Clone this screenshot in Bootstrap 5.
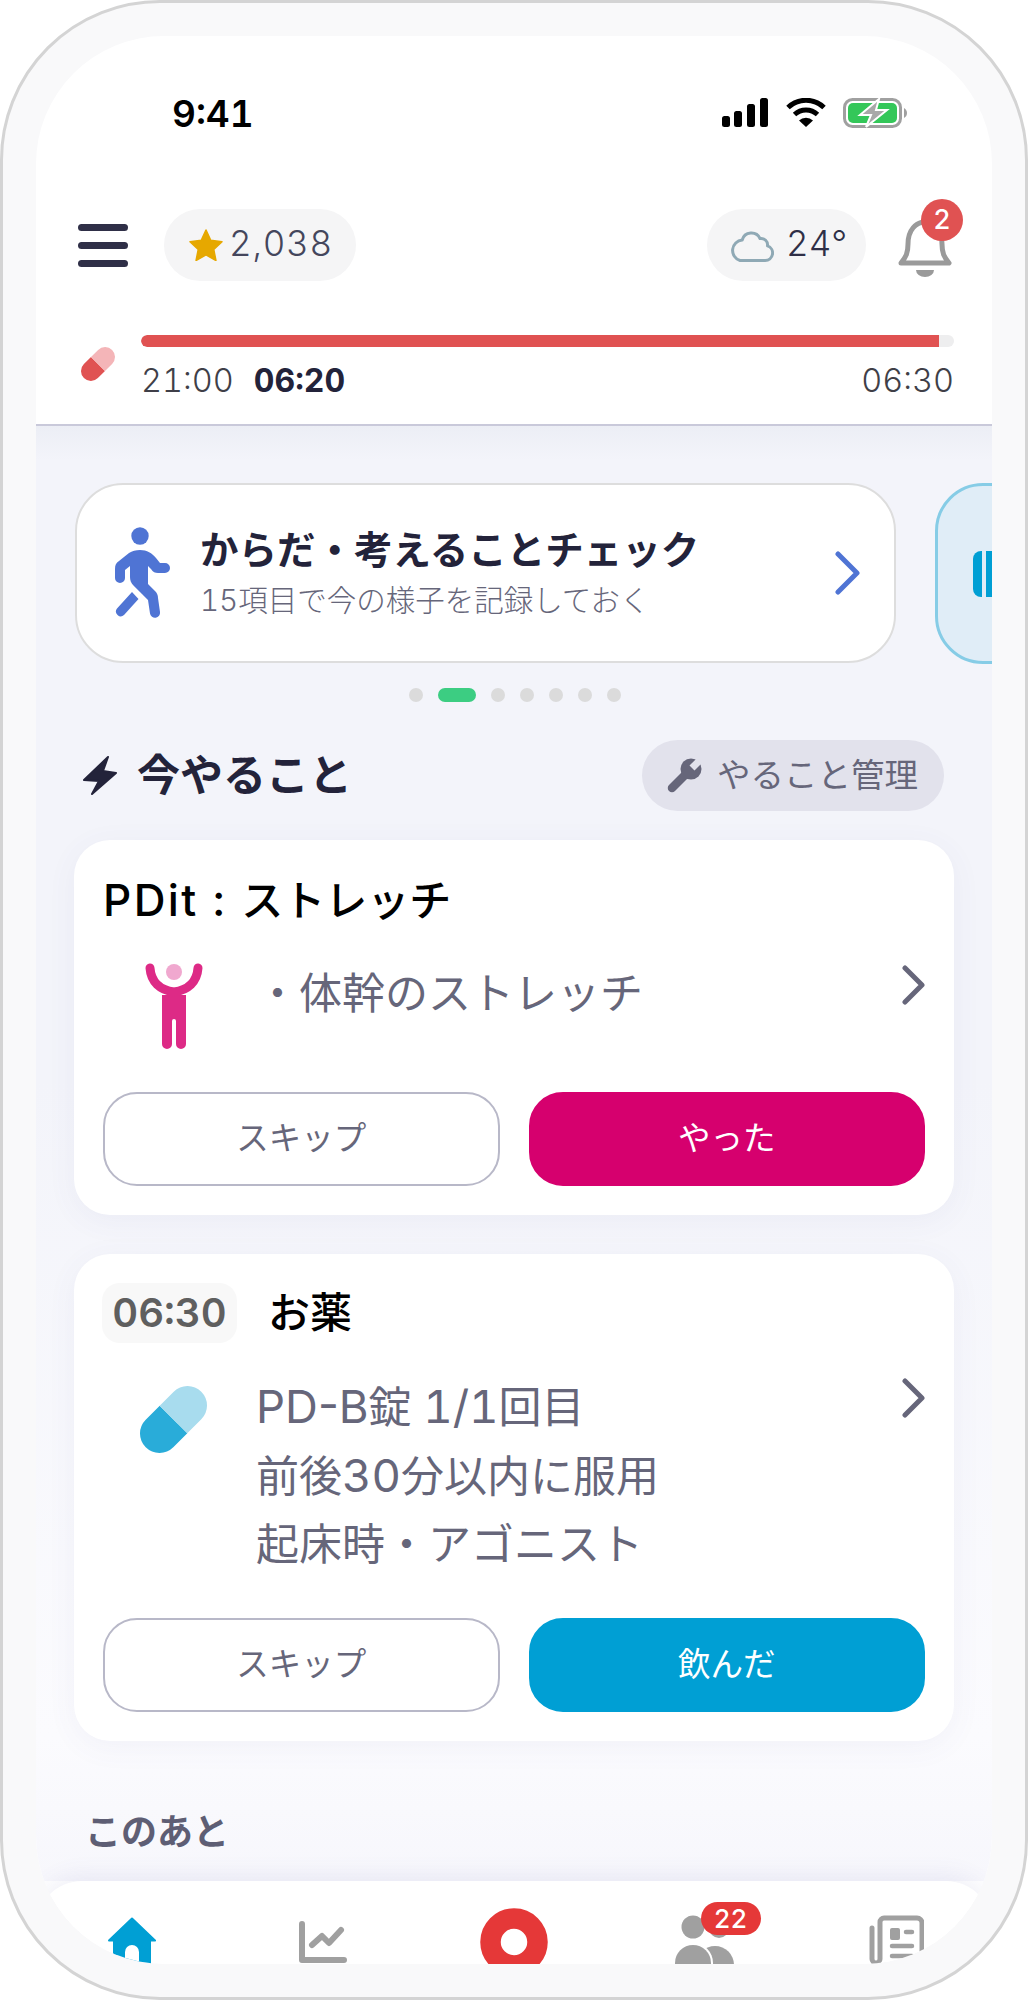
<!DOCTYPE html>
<html lang="ja">

<head>
    <meta charset="UTF-8">
    <meta name="viewport" content="width=device-width, initial-scale=1">
    <title>今やること</title>
    <link href="https://cdn.jsdelivr.net/npm/bootstrap@5.3.0/dist/css/bootstrap.min.css" rel="stylesheet">
    <style>
        body { margin: 0; background: #fff; font-family: "Inter", "Noto Sans CJK JP", sans-serif; font-variant-numeric: tabular-nums; }
        svg { display: block; flex-shrink: 0; }
        .device { width: 1028px; height: 2000px; padding: 33px; border: 3px solid #d4d4d4; border-radius: 160px; background: #f9f9fa; }
        .screen { height: 1928px; border-radius: 128px; overflow: hidden; background: #fff; }

        .status-bar { height: 173px; padding: 58px 84px 0 136px; }
        .clock { font-size: 37px; line-height: 40px; font-weight: 600; color: #000; }
        .status-icons { gap: 17.5px; margin-top: 4px; }

        .top-row { height: 72px; padding: 0 40px 0 42px; }
        .chip-pill { height: 72px; border-radius: 36px; background: #f5f5f6; color: #44465c; font-size: 35px; font-weight: 350; letter-spacing: .8px; }
        .chip-pill span { margin-top: -4px; }
        .score-pill { width: 192px; margin-left: 36px; padding-left: 25px; gap: 6px; }
        .weather-pill { width: 159px; padding-left: 24px; gap: 12px; color: #2f2f47; letter-spacing: 0; }
        .bell-box { position: relative; width: 54px; height: 57px; margin: 11px 0 0 32px; align-self: flex-start; }
        .bell-count { position: absolute; top: -21px; left: 23px; width: 42px; height: 42px; border-radius: 50%; background: #e05252; color: #fff; font-size: 27px; font-weight: 500; line-height: 42px; text-align: center; }

        .sleep-row { padding: 54px 38px 22px 45px; gap: 26px; border-bottom: 2px solid #c9c9da; }
        .sleep-icon { margin-top: 12px; }
        .sleep-bar { height: 12px; border-radius: 6px; background: #eeeeef; overflow: hidden; }
        .sleep-fill { height: 100%; background: #e05252; border-radius: 6px 0 0 6px; }
        .sleep-times { margin-top: 13px; height: 42px; font-size: 32.5px; line-height: 42px; font-weight: 350; color: #3f3f48; }
        .sleep-times b { margin-left: 20px; font-size: 32px; color: #23233a; font-weight: 700; }

        .main-area { min-height: 0; background: linear-gradient(#eceef5 0, #f3f4fa 34px, #f3f4fa 45%, #fbfbfe 90%, #f7f7fc 100%); }
        .banner-strip { padding: 57px 0 0 39px; gap: 39px; }
        .banner-box { flex: 0 0 821px; height: 180px; border: 2px solid #ddd; border-radius: 48px; background: #fff; padding: 0 34px 0 38px; gap: 30px; }
        .banner-next { flex: 0 0 300px; height: 181px; border: 3px solid #86cce6; border-radius: 48px; background: #e0edf7; padding-left: 33px; }
        .banner-title { font-size: 38.5px; line-height: 52px; font-weight: 700; color: #23233a; }
        .banner-sub { margin-top: 2px; font-size: 29.5px; line-height: 44px; font-weight: 300; color: #66667a; }

        .page-dots { margin-top: 24px; padding-left: 2px; gap: 15px; }
        .page-dot { width: 14px; height: 14px; border-radius: 7px; background: #dbdbdb; }
        .page-dot.on { width: 38px; background: #3ccd82; }

        .section-head { margin: 38px 48px 0 47px; height: 71px; }
        .section-title { font-size: 43px; font-weight: 700; color: #23233a; gap: 19px; }
        .manage-btn { height: 71px; width: 302px; border-radius: 36px; background: #e2e2ec; color: #66667a; font-size: 33.5px; padding-left: 25px; gap: 15px; }

        .task-card { margin: 29px 38px 0; padding: 30px 29px 29px; border: 0; border-radius: 36px; box-shadow: 0 6px 30px rgba(90, 90, 160, .06); }
        .task-card + .task-card { margin-top: 39px; padding-top: 29px; }
        .task-title { height: 60px; font-size: 42px; line-height: 60px; font-weight: 500; color: #000; }
        .title-latin { font-size: 44px; letter-spacing: 2.4px; }
        .time-chip { margin-left: -1px; width: 135px; height: 60px; border-radius: 18px; background: #f8f8f8; color: #5f5f5f; font-size: 40px; font-weight: 600; }
        .head-gap { gap: 31px; }
        .task-body { margin-top: 33px; height: 87px; }
        .task-body.tall { margin-top: 29px; height: 207px; }
        .task-icon-cell { width: 153px; }
        .stretch-icon { margin-left: 42px; }
        .pill-icon { margin: 14px 0 0 37px; }
        .task-text { margin-top: -4px; font-size: 43px; line-height: 69px; color: #66667a; }
        .text-line { display: block; height: 69px; }
        .text-latin { font-size: 45.5px; }
        .text-name { font-size: 45.5px; font-variant-numeric: normal; font-feature-settings: normal; }
        .tall .task-text { margin-top: 0; }
        .task-chevron { margin: 2px 0 0 auto; }
        .tall .task-chevron { margin-top: 6px; }
        .task-actions { margin-top: 42px; gap: 29px; }
        .tall + .task-actions { margin-top: 39px; }
        .act-btn { flex: 1 1 0; height: 94px; border-width: 2px; border-style: solid; border-radius: 34px; font-size: 32.5px; }
        .act-skip { background: #fff; border-color: #b8b8c8; color: #66667a; }
        .act-pink { background: #d6006e; border-color: #d6006e; color: #fff; }
        .act-blue { background: #009fd4; border-color: #009fd4; color: #fff; }

        .later-label { margin: 67px 0 0 49px; font-size: 36px; line-height: 48px; font-weight: 700; color: #5e5e74; }

        .tab-bar { height: 83px; flex-shrink: 0; background: #fff; border-radius: 46px 46px 0 0; box-shadow: 0 -6px 22px rgba(90, 90, 170, .09); }
        .tab-item { position: relative; flex: 1 1 0; }
        .tab-count { position: absolute; top: 21px; left: 91px; width: 60px; height: 33px; border-radius: 17px; background: #e53838; color: #fff; font-size: 26px; font-weight: 500; line-height: 33px; text-align: center; }
    </style>
</head>

<body>
    <div class="device">
        <div class="screen d-flex flex-column">

            <!-- ステータスバー -->
            <div class="status-bar d-flex justify-content-between align-items-start flex-shrink-0">
                <div class="clock">9:41</div>
                <div class="status-icons d-flex align-items-start">
                    <svg width="46" height="29" viewBox="0 0 46 29">
                        <rect x="0" y="18" width="8" height="11" rx="2.5" />
                        <rect x="12" y="13" width="8" height="16" rx="2.5" />
                        <rect x="25" y="6" width="8" height="23" rx="2.5" />
                        <rect x="38" y="0" width="8" height="29" rx="2.5" />
                    </svg>
                    <svg width="40" height="29" viewBox="0 0 40 29" fill="none" stroke="#000" stroke-width="5">
                        <path d="M2 9.5A26 26 0 0 1 38 9.5" />
                        <path d="M8.5 16.5A17 17 0 0 1 31.5 16.5" />
                        <path d="M20 29L13 22.5A10 10 0 0 1 27 22.5Z" fill="#000" stroke="none" />
                    </svg>
                    <svg width="65" height="30" viewBox="0 0 65 30">
                        <rect x="1.5" y="1.5" width="56" height="27" rx="8" fill="none" stroke="#a0a0a0" stroke-width="3" />
                        <rect x="5" y="5" width="49" height="20" rx="5" fill="#34c759" />
                        <path d="M61 10c2 1 3 3 3 5s-1 4-3 5z" fill="#a0a0a0" />
                        <path d="M36 1L17 17H28L23 29L44 12H33Z" fill="#a8a8a8" stroke="#fff" stroke-width="2" />
                    </svg>
                </div>
            </div>

            <!-- ヘッダー -->
            <div class="top-row d-flex align-items-center flex-shrink-0">
                <svg width="50" height="43" viewBox="0 0 50 43" fill="#2f2f47">
                    <rect y="0" width="50" height="7" rx="3.5" />
                    <rect y="18" width="50" height="7" rx="3.5" />
                    <rect y="36" width="50" height="7" rx="3.5" />
                </svg>
                <div class="chip-pill score-pill d-flex align-items-center">
                    <svg width="34" height="32" viewBox="1 1 32 31">
                        <path d="M17 2l4.600 10 10.900 1.300-8 7.500 2.100 10.700L17 26.100 7.400 31.500l2.100-10.700-8-7.500L12.400 12z" fill="#e6a800" stroke="#e6a800" stroke-width="1.5" stroke-linejoin="round" />
                    </svg>
                    <span>2,038</span>
                </div>
                <div class="chip-pill weather-pill d-flex align-items-center ms-auto">
                    <svg width="43" height="34" viewBox="0 0 43 34" fill="none" stroke="#8fa9b5" stroke-width="3">
                        <path d="M9 32.500h25a7.500 7.500 0 0 0 2.500-14.600A6.500 6.500 0 0 0 29 10.500a9.500 9.500 0 0 0-17.800 1.500A10.500 10.500 0 0 0 9 32.500z" stroke-linejoin="round" />
                    </svg>
                    <span>24°</span>
                </div>
                <div class="bell-box">
                    <svg width="54" height="57" viewBox="0 0 54 57">
                        <path d="M3 43C8 37 10 33 10 24C10 10 18 2 27 2C36 2 44 10 44 24C44 33 46 37 51 43Z" fill="none" stroke="#9a9a9a" stroke-width="5" stroke-linejoin="round" />
                        <path d="M18 50h18a9 7 0 0 1-18 0z" fill="#9a9a9a" />
                    </svg>
                    <div class="bell-count">2</div>
                </div>
            </div>

            <!-- 睡眠バー -->
            <div class="sleep-row d-flex align-items-start flex-shrink-0">
                <svg class="sleep-icon" width="34" height="34" viewBox="0 0 67 67">
                    <g transform="rotate(-45 33.500 33.500)">
                        <path d="M33.500 14H13.700A19.500 19.500 0 0 0 13.700 53H33.500Z" fill="#e05252" />
                        <path d="M33.500 14H53.300A19.500 19.500 0 0 1 53.300 53H33.500Z" fill="#f4b5b8" />
                    </g>
                </svg>
                <div class="flex-grow-1">
                    <div class="sleep-bar">
                        <div class="sleep-fill" style="width: 98.2%"></div>
                    </div>
                    <div class="sleep-times d-flex">
                        <span>21:00</span><b>06:20</b><span class="ms-auto">06:30</span>
                    </div>
                </div>
            </div>

            <div class="main-area flex-grow-1">
                <!-- カルーセル -->
                <div class="banner-strip d-flex">
                    <div class="banner-box d-flex align-items-center">
                        <svg width="55" height="92" viewBox="115 528 55 92" fill="#4f74d4">
                            <circle cx="140" cy="537" r="8.700" />
                            <path d="M140 551C147 551 152 554 156 559L160 564H165a5 5 0 0 1 0 10H158C155 574 153 573 151 570L148 567L148 585L155 592C157 594 158 596 158 599L160 613a5 5 0 0 1-10 1.500L148 601L133 586C131 584 130 581 130 578L130 567L125 571V579a5 5 0 0 1-10 0V570C115 566 116 564 119 562L129 554C132 552 136 551 140 551Z" />
                            <path d="M132 593L138.500 600L124 616a4.800 4.800 0 0 1-7-6.500Z" />
                        </svg>
                        <div class="flex-grow-1">
                            <div class="banner-title">からだ・考えることチェック</div>
                            <div class="banner-sub">15項目で今の様子を記録しておく</div>
                        </div>
                        <svg width="25" height="44" viewBox="0 0 25 44" fill="none" stroke="#4f74d4" stroke-width="5" stroke-linecap="round" stroke-linejoin="round">
                            <path d="M3 3L22 22L3 41" />
                        </svg>
                    </div>
                    <div class="banner-next d-flex align-items-center">
                        <svg width="40" height="46" viewBox="0 0 40 46" fill="#009fd4">
                            <path d="M10 0h1v46h-1a8 8 0 0 1-8-8V8a8 8 0 0 1 8-8z" />
                            <rect x="15" y="0" width="25" height="46" />
                        </svg>
                    </div>
                </div>

                <div class="page-dots d-flex justify-content-center">
                    <span class="page-dot"></span>
                    <span class="page-dot on"></span>
                    <span class="page-dot"></span>
                    <span class="page-dot"></span>
                    <span class="page-dot"></span>
                    <span class="page-dot"></span>
                    <span class="page-dot"></span>
                </div>

                <!-- 今やること -->
                <div class="section-head d-flex justify-content-between align-items-center">
                    <div class="section-title d-flex align-items-center">
                        <svg width="35" height="41" viewBox="83 755 35 41">
                            <path d="M108 757L84 780L99 781L92 794L116 773L103 771Z" fill="#23233a" stroke="#23233a" stroke-width="2" stroke-linejoin="round" />
                        </svg>
                        <span>今やること</span>
                    </div>
                    <div class="manage-btn d-flex align-items-center">
                        <svg width="35" height="35" viewBox="0 0 35 35">
                            <path d="M5 30L20 15" stroke="#66667a" stroke-width="8.500" stroke-linecap="round" />
                            <circle cx="24" cy="11" r="10.500" fill="#66667a" />
                            <path d="M25 10L36 -1" stroke="#e2e2ec" stroke-width="7" />
                        </svg>
                        <span>やること管理</span>
                    </div>
                </div>

                <!-- カード -->
                <div class="card task-card">
                    <div class="task-title"><span class="title-latin">PDit : </span>ストレッチ</div>
                    <div class="task-body d-flex align-items-start">
                        <div class="task-icon-cell flex-shrink-0">
                            <svg class="stretch-icon" width="58" height="87" viewBox="145 963 58 87">
                                <circle cx="174" cy="972" r="8" fill="#f0a8cf" />
                                <path d="M150 968C151 982 160 990 174 992C188 990 197 982 198 968" fill="none" stroke="#dd2a86" stroke-width="9" stroke-linecap="round" />
                                <path d="M162 995H186V1044a5 5 0 0 1-10 0V1021a2 2 0 0 0-4 0V1044a5 5 0 0 1-10 0Z" fill="#dd2a86" />
                            </svg>
                        </div>
                        <div class="task-text">・体幹のストレッチ</div>
                        <svg class="task-chevron" width="23" height="40" viewBox="0 0 23 40" fill="none" stroke="#66667a" stroke-width="5" stroke-linecap="round" stroke-linejoin="round">
                            <path d="M3 3L20 20L3 37" />
                        </svg>
                    </div>
                    <div class="task-actions d-flex">
                        <button class="btn act-btn act-skip" type="button">スキップ</button>
                        <button class="btn act-btn act-pink" type="button">やった</button>
                    </div>
                </div>

                <div class="card task-card">
                    <div class="d-flex align-items-center head-gap">
                        <div class="time-chip d-flex align-items-center justify-content-center">06:30</div>
                        <div class="task-title">お薬</div>
                    </div>
                    <div class="task-body tall d-flex align-items-start">
                        <div class="task-icon-cell flex-shrink-0">
                            <svg class="pill-icon" width="67" height="67" viewBox="0 0 67 67">
                                <g transform="rotate(-45 33.500 33.500)">
                                    <path d="M33.500 14H13.700A19.500 19.500 0 0 0 13.700 53H33.500Z" fill="#29acd9" />
                                    <path d="M33.500 14H53.300A19.500 19.500 0 0 1 53.300 53H33.500Z" fill="#a8dcee" />
                                </g>
                            </svg>
                        </div>
                        <div class="task-text">
                            <span class="text-line"><span class="text-name">PD-B</span>錠 <span class="text-latin">1/1</span>回目</span>
                            <span class="text-line">前後<span class="text-latin">30</span>分以内に服用</span>
                            <span class="text-line">起床時・アゴニスト</span>
                        </div>
                        <svg class="task-chevron" width="23" height="40" viewBox="0 0 23 40" fill="none" stroke="#66667a" stroke-width="5" stroke-linecap="round" stroke-linejoin="round">
                            <path d="M3 3L20 20L3 37" />
                        </svg>
                    </div>
                    <div class="task-actions d-flex">
                        <button class="btn act-btn act-skip" type="button">スキップ</button>
                        <button class="btn act-btn act-blue" type="button">飲んだ</button>
                    </div>
                </div>

                <div class="later-label">このあと</div>
            </div>

            <!-- タブバー -->
            <div class="tab-bar d-flex">
                <div class="tab-item d-flex justify-content-center">
                    <svg width="48" height="83" viewBox="0 0 48 83">
                        <path d="M24 37.500L47 59.500H42V83H6V59.500H1Z" fill="#009fd4" stroke="#009fd4" stroke-width="2" stroke-linejoin="round" />
                        <path d="M17 83V71a7 7 0 0 1 14 0V83Z" fill="#fff" />
                    </svg>
                </div>
                <div class="tab-item d-flex justify-content-center">
                    <svg width="48" height="83" viewBox="0 0 48 83" fill="none" stroke="#a0a0a0" stroke-linecap="round" stroke-linejoin="round">
                        <path d="M3 43V79H45" stroke-width="6" />
                        <path d="M13 64L23 55L30 62L42 49" stroke-width="6" />
                    </svg>
                </div>
                <div class="tab-item d-flex justify-content-center">
                    <svg width="68" height="83" viewBox="0 0 68 83">
                        <circle cx="34" cy="61" r="23.500" fill="none" stroke="#e53838" stroke-width="20.500" />
                    </svg>
                </div>
                <div class="tab-item d-flex justify-content-center">
                    <svg width="60" height="83" viewBox="0 0 60 83" fill="#a0a0a0">
                        <circle cx="18" cy="46" r="11.500" />
                        <circle cx="44" cy="47" r="10" />
                        <circle cx="40" cy="84" r="19" />
                        <circle cx="18" cy="82" r="20" fill="#fff" />
                        <circle cx="18" cy="82" r="18" />
                    </svg>
                    <div class="tab-count">22</div>
                </div>
                <div class="tab-item d-flex justify-content-center">
                    <svg width="55" height="83" viewBox="0 0 55 83" fill="none" stroke="#a0a0a0" stroke-linecap="round">
                        <path d="M3 47V78a4 4 0 0 0 8 0V41a4 4 0 0 1 4-4H48a5 5 0 0 1 5 5V83" stroke-width="5" />
                        <rect x="21" y="47" width="10" height="12" rx="2" fill="#a0a0a0" stroke="none" />
                        <path d="M37 51H43M23 65H43M23 75H43" stroke-width="4.500" />
                    </svg>
                </div>
            </div>
        </div>
    </div>

    <script src="https://cdn.jsdelivr.net/npm/bootstrap@5.3.0/dist/js/bootstrap.bundle.min.js"></script>
</body>

</html>
